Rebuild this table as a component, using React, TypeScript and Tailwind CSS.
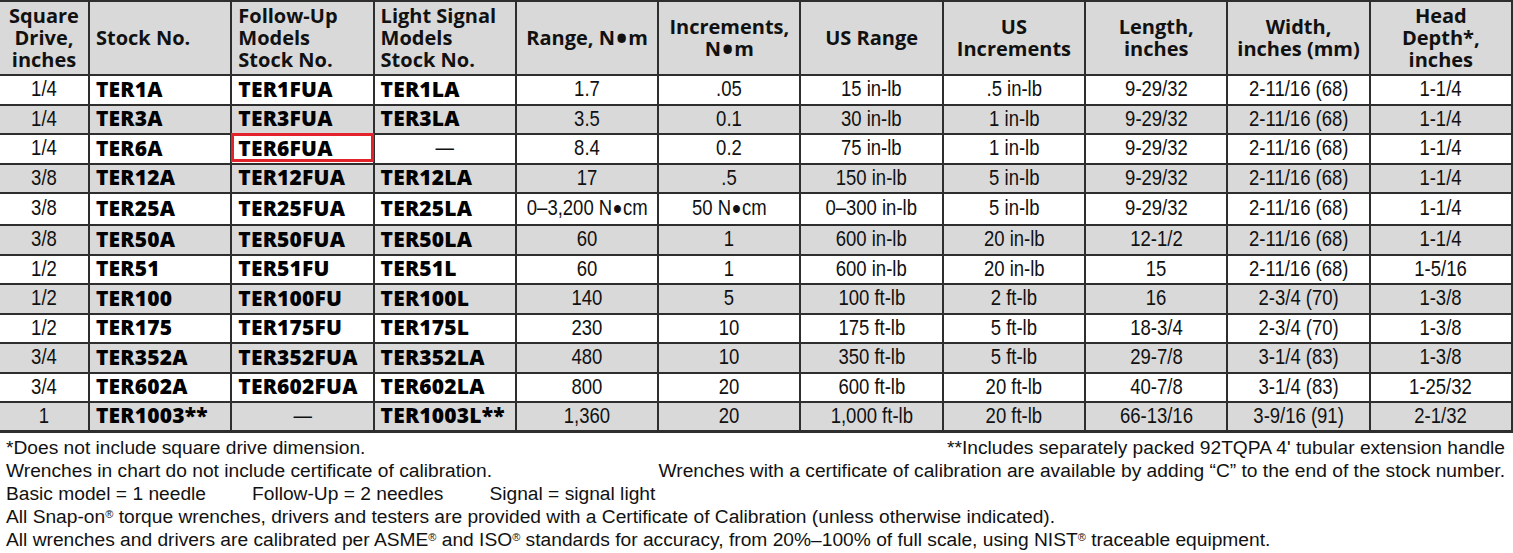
import React from 'react';

type Row = {
  drive: string;
  stock: string;
  followUp: string;
  signal: string;
  range: string;
  inc: string;
  usRange: string;
  usInc: string;
  length: string;
  width: string;
  depth: string;
  tall?: boolean;
  marked?: boolean;
};

const rows: Row[] = [
  { drive: '1/4', stock: 'TER1A', followUp: 'TER1FUA', signal: 'TER1LA', range: '1.7', inc: '.05', usRange: '15 in-lb', usInc: '.5 in-lb', length: '9-29/32', width: '2-11/16 (68)', depth: '1-1/4' },
  { drive: '1/4', stock: 'TER3A', followUp: 'TER3FUA', signal: 'TER3LA', range: '3.5', inc: '0.1', usRange: '30 in-lb', usInc: '1 in-lb', length: '9-29/32', width: '2-11/16 (68)', depth: '1-1/4' },
  { drive: '1/4', stock: 'TER6A', followUp: 'TER6FUA', signal: '—', range: '8.4', inc: '0.2', usRange: '75 in-lb', usInc: '1 in-lb', length: '9-29/32', width: '2-11/16 (68)', depth: '1-1/4', marked: true },
  { drive: '3/8', stock: 'TER12A', followUp: 'TER12FUA', signal: 'TER12LA', range: '17', inc: '.5', usRange: '150 in-lb', usInc: '5 in-lb', length: '9-29/32', width: '2-11/16 (68)', depth: '1-1/4' },
  { drive: '3/8', stock: 'TER25A', followUp: 'TER25FUA', signal: 'TER25LA', range: '0–3,200 N•cm', inc: '50 N•cm', usRange: '0–300 in-lb', usInc: '5 in-lb', length: '9-29/32', width: '2-11/16 (68)', depth: '1-1/4', tall: true },
  { drive: '3/8', stock: 'TER50A', followUp: 'TER50FUA', signal: 'TER50LA', range: '60', inc: '1', usRange: '600 in-lb', usInc: '20 in-lb', length: '12-1/2', width: '2-11/16 (68)', depth: '1-1/4' },
  { drive: '1/2', stock: 'TER51', followUp: 'TER51FU', signal: 'TER51L', range: '60', inc: '1', usRange: '600 in-lb', usInc: '20 in-lb', length: '15', width: '2-11/16 (68)', depth: '1-5/16' },
  { drive: '1/2', stock: 'TER100', followUp: 'TER100FU', signal: 'TER100L', range: '140', inc: '5', usRange: '100 ft-lb', usInc: '2 ft-lb', length: '16', width: '2-3/4 (70)', depth: '1-3/8' },
  { drive: '1/2', stock: 'TER175', followUp: 'TER175FU', signal: 'TER175L', range: '230', inc: '10', usRange: '175 ft-lb', usInc: '5 ft-lb', length: '18-3/4', width: '2-3/4 (70)', depth: '1-3/8' },
  { drive: '3/4', stock: 'TER352A', followUp: 'TER352FUA', signal: 'TER352LA', range: '480', inc: '10', usRange: '350 ft-lb', usInc: '5 ft-lb', length: '29-7/8', width: '3-1/4 (83)', depth: '1-3/8' },
  { drive: '3/4', stock: 'TER602A', followUp: 'TER602FUA', signal: 'TER602LA', range: '800', inc: '20', usRange: '600 ft-lb', usInc: '20 ft-lb', length: '40-7/8', width: '3-1/4 (83)', depth: '1-25/32' },
  { drive: '1', stock: 'TER1003**', followUp: '—', signal: 'TER1003L**', range: '1,360', inc: '20', usRange: '1,000 ft-lb', usInc: '20 ft-lb', length: '66-13/16', width: '3-9/16 (91)', depth: '2-1/32' },
];

const cell = 'border-2 border-[#2e2e2e] p-0 leading-none';

// big round bullet used in "N•m" / "N•cm"
const withDots = (text: string, dotClass: string) =>
  text.split('•').map((part, i) => (
    <React.Fragment key={i}>
      {i > 0 && <span className={dotClass}>•</span>}
      {part}
    </React.Fragment>
  ));

const Num: React.FC<{ value: string; first?: boolean }> = ({ value, first }) => (
  <td className={`${cell} ${first ? 'border-l-0' : ''} text-center`}>
    <span className="inline-block scale-x-[0.86] whitespace-nowrap">
      {withDots(value, 'text-[30px] leading-[0] align-[-4px] mx-[1px]')}
    </span>
  </td>
);

const StockCell: React.FC<{ value: string; marked?: boolean }> = ({ value, marked }) => {
  const dash = value === '—';
  return (
    <td className={`${cell} relative ${dash ? 'text-center' : 'pl-[6px] text-left'}`}>
      {dash ? (
        <span className="inline-block scale-x-[0.86]">{value}</span>
      ) : (
        <span className="font-['Open_Sans',sans-serif] font-extrabold text-[21px] tracking-[0.2px] text-black">{value}</span>
      )}
      {marked && (
        <span className="absolute -left-[1px] -right-[1px] -top-[2px] bottom-[1px] border-[3px] border-[#e3232b]" />
      )}
    </td>
  );
};

const Th: React.FC<{ left?: boolean; first?: boolean; children: React.ReactNode }> = ({ left, first, children }) => (
  <th
    className={`border-2 border-[#2e2e2e] p-0 ${first ? 'border-l-0' : ''} ${left ? 'pl-[6px] text-left' : 'text-center'} align-middle font-bold leading-[22px] text-[20px] text-[#111]`}
  >
    {children}
  </th>
);

const hdot = 'text-[30px] leading-[0] align-[-4px] mx-[1px]';

export default function App() {
  return (
    <div className="w-[1513px] overflow-hidden bg-white text-black">
      <table className="w-[1513px] table-fixed border-collapse">
        <colgroup>
          <col className="w-[89px]" />
          <col />
          <col />
          <col />
          <col />
          <col />
          <col />
          <col />
          <col />
          <col />
          <col />
        </colgroup>
        <thead className="font-['Open_Sans',sans-serif]">
          <tr className="h-[74px] bg-[#d9d9d9]">
            <Th first>
              Square
              <br />
              Drive,
              <br />
              inches
            </Th>
            <Th left>Stock No.</Th>
            <Th left>
              Follow-Up
              <br />
              Models
              <br />
              Stock No.
            </Th>
            <Th left>
              Light Signal
              <br />
              Models
              <br />
              Stock No.
            </Th>
            <Th>{withDots('Range, N•m', hdot)}</Th>
            <Th>
              Increments,
              <br />
              {withDots('N•m', hdot)}
            </Th>
            <Th>US Range</Th>
            <Th>
              US
              <br />
              Increments
            </Th>
            <Th>
              Length,
              <br />
              inches
            </Th>
            <Th>
              Width,
              <br />
              inches (mm)
            </Th>
            <Th>
              Head
              <br />
              Depth*,
              <br />
              inches
            </Th>
          </tr>
        </thead>
        <tbody className="font-['Liberation_Sans',Arial,sans-serif] text-[21.5px] text-[#111]">
          {rows.map((r, i) => (
            <tr
              key={r.stock}
              className={`${r.tall ? 'h-[32px]' : 'h-[29.5px]'} ${i % 2 === 1 ? 'bg-[#d9d9d9]' : 'bg-white'} ${i === rows.length - 1 ? 'border-b-[3px] border-[#2e2e2e]' : ''}`}
            >
              <Num value={r.drive} first />
              <StockCell value={r.stock} />
              <StockCell value={r.followUp} marked={r.marked} />
              <StockCell value={r.signal} />
              <Num value={r.range} />
              <Num value={r.inc} />
              <Num value={r.usRange} />
              <Num value={r.usInc} />
              <Num value={r.length} />
              <Num value={r.width} />
              <Num value={r.depth} />
            </tr>
          ))}
        </tbody>
      </table>

      {/* Footnotes */}
      <div className="font-['Liberation_Sans',Arial,sans-serif] pl-[6px] pr-[8px] pt-[3px] text-[19.2px] leading-[23px] text-[#111]">
        <div className="flex justify-between whitespace-nowrap">
          <span>*Does not include square drive dimension.</span>
          <span>**Includes separately packed 92TQPA 4' tubular extension handle</span>
        </div>
        <div className="flex justify-between whitespace-nowrap">
          <span>Wrenches in chart do not include certificate of calibration.</span>
          <span>Wrenches with a certificate of calibration are available by adding “C” to the end of the stock number.</span>
        </div>
        <div className="flex gap-[46px] whitespace-nowrap">
          <span>Basic model = 1 needle</span>
          <span>Follow-Up = 2 needles</span>
          <span>Signal = signal light</span>
        </div>
        <div className="whitespace-nowrap">
          All Snap-on<sup className="text-[11px]">®</sup> torque wrenches, drivers and testers are provided with a
          Certificate of Calibration (unless otherwise indicated).
        </div>
        <div className="whitespace-nowrap">
          All wrenches and drivers are calibrated per ASME<sup className="text-[11px]">®</sup> and ISO
          <sup className="text-[11px]">®</sup> standards for accuracy, from 20%–100% of full scale, using NIST
          <sup className="text-[11px]">®</sup> traceable equipment.
        </div>
      </div>
    </div>
  );
}
